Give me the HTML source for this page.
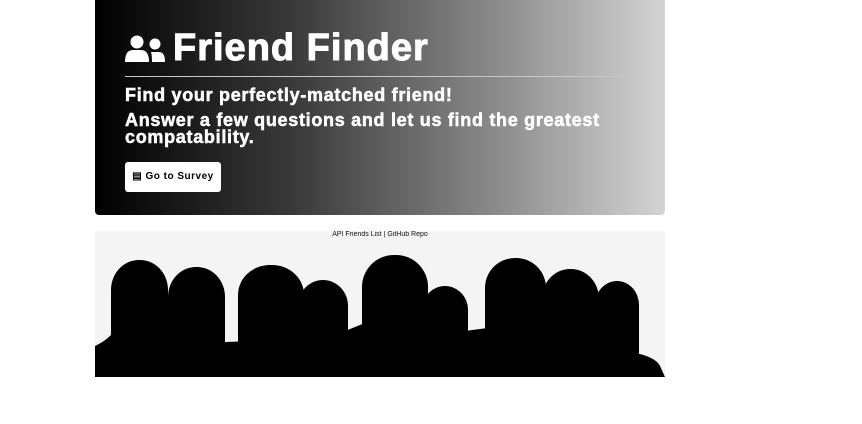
<!DOCTYPE html>
<html><head><meta charset="utf-8"><style>
html,body{margin:0;padding:0;background:#fff;width:862px;height:424px;overflow:hidden;font-family:"Liberation Sans",sans-serif}
.hero{position:absolute;left:95px;top:0;width:570px;height:215px;background:linear-gradient(to right,#000 0%,#3a3a3a 35%,#8a8a8a 70%,#d4d4d4 100%);border-radius:0 0 4px 4px}
h1{position:absolute;left:78px;top:28px;margin:0;font-size:38px;font-weight:900;color:#fff;letter-spacing:1px;line-height:40px;-webkit-text-stroke:1px #fff}
.ic{position:absolute;left:30px;top:35px}
.hr{position:absolute;left:30px;top:76px;width:510px;height:1px;background:#c8c8c8}
.s1{position:absolute;left:30px;top:85px;font-size:18px;font-weight:bold;color:#fff;margin:0;line-height:20px;letter-spacing:0.7px;-webkit-text-stroke:0.5px #fff}
.s2{position:absolute;left:30px;top:112px;font-size:18px;font-weight:bold;color:#fff;margin:0;line-height:17px;width:520px;letter-spacing:0.7px;-webkit-text-stroke:0.5px #fff}
.btn{position:absolute;left:30px;top:162px;width:96px;height:30px;background:#fff;border-radius:3px;font-size:10px;font-weight:bold;color:#000;line-height:30px;text-align:center;letter-spacing:0.5px}
.crowd{position:absolute;left:95px;top:231px;width:570px;height:146px;background:#f4f4f4;overflow:hidden}
.links{position:absolute;left:0;width:570px;top:0;text-align:center;font-size:7px;color:#111}
</style></head><body>
<div class="hero">
<svg class="ic" width="40" height="28" viewBox="0 0 40 28"><circle cx="12" cy="7" r="6.5" fill="#fff"/><path d="M0 27 Q0 15 8 15 L16 15 Q24 15 24 27 Z" fill="#fff"/><circle cx="30" cy="9" r="5.5" fill="#fff"/><path d="M26 17 L34 17 Q40 17 40 27 L27 27 Q27 20 26 17Z" fill="#fff"/></svg>
<h1>Friend Finder</h1>
<div class="hr"></div>
<div class="s1">Find your perfectly-matched friend!</div>
<div class="s2">Answer a few questions and let us find the greatest compatability.</div>
<div class="btn">▤ Go to Survey</div>
</div>
<div class="crowd">
<svg width="570" height="146" viewBox="0 0 570 146" style="position:absolute;left:0;top:0">
<g fill="#000">
<rect x="16" y="29" width="57" height="130" rx="28" ry="30"/>
<rect x="73" y="36" width="57" height="130" rx="28" ry="30"/>
<rect x="143" y="34" width="66" height="130" rx="32" ry="30"/>
<rect x="203" y="49" width="50" height="130" rx="25" ry="26"/>
<rect x="267" y="24" width="66" height="130" rx="32" ry="32"/>
<rect x="327" y="55" width="46" height="130" rx="23" ry="24"/>
<rect x="390" y="27" width="61" height="130" rx="30" ry="30"/>
<rect x="447" y="38" width="57" height="130" rx="28" ry="30"/>
<rect x="500" y="50" width="44" height="95" rx="22" ry="24"/>
<path d="M0 115 Q15 108 22 96 L75 96 Q85 100 100 112 L160 110 L200 102 L240 104 L270 92 L330 94 L370 100 L400 96 L450 100 L500 104 L535 121 Q560 125 565 135 L570 146 L0 146Z"/>
</g></svg>
<div class="links">API Friends List | GitHub Repo</div>
</div>
</body></html>
